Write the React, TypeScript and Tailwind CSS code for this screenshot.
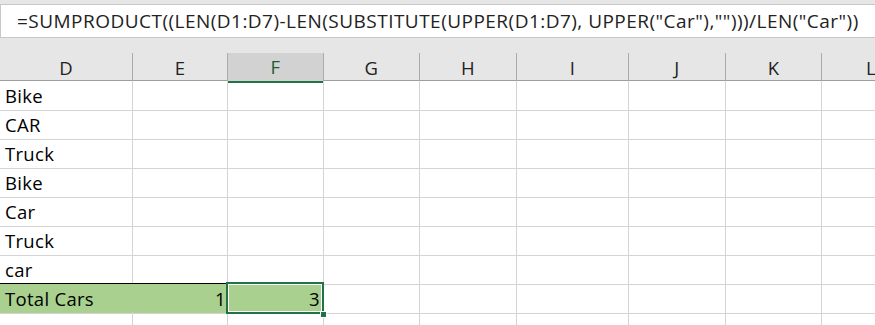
import React from 'react';

const cols = ['D', 'E', 'F', 'G', 'H', 'I', 'J', 'K', 'L'];
const rows = ['Bike', 'CAR', 'Truck', 'Bike', 'Car', 'Truck', 'car'];
const gridCols = 'grid grid-cols-[133px_95px_96px_96px_97px_112px_97px_96px_1fr]';

const App = () => {
  return (
    <div className="w-[875px] h-[325px] overflow-hidden bg-white font-['Open_Sans',sans-serif] text-[18.5px] tracking-[0.3px] text-black">
      <div className="bg-[#e6e6e6] pt-[4px]">
        <div className="h-[34px] bg-white border border-r-0 border-[#c8c8c8] flex items-center pl-[16px] whitespace-nowrap text-[19px] tracking-[0.47px] text-[#222]">
          =SUMPRODUCT((LEN(D1:D7)-LEN(SUBSTITUTE(UPPER(D1:D7), UPPER("Car"),"")))/LEN("Car"))
        </div>
        <div className="h-[15px]" />
        <div className={`${gridCols} h-[28px] border-b border-[#9e9e9e]`}>
          {cols.map((c, i) => (
            <div
              key={c}
              className={
                c === 'F'
                  ? 'bg-[#d2d2d2] border-r border-[#ababab] border-b-2 border-b-[#217346] flex items-center justify-center text-[#1d5a36]'
                  : `flex items-center ${c === 'L' ? 'justify-start pl-[44px]' : 'justify-center'} ${i < cols.length - 1 ? 'border-r border-[#ababab]' : ''} text-[#222]`
              }
            >
              {c}
            </div>
          ))}
        </div>
      </div>
      {rows.map((r, ri) => (
        <div key={ri} className={`${gridCols} h-[29px]`}>
          {cols.map((c, i) => (
            <div
              key={c}
              className={`border-b ${i < cols.length - 1 ? 'border-r' : ''} border-[#d4d4d4] flex items-center pl-[5px] pt-[1px]`}
            >
              {i === 0 ? r : ''}
            </div>
          ))}
        </div>
      ))}
      <div className={`${gridCols} h-[29px] -mt-[1px]`}>
        <div className="bg-[#a9d08e] border-t border-black border-b border-b-[#d4d4d4] flex items-center pl-[5px] pt-[1px]">Total Cars</div>
        <div className="bg-[#a9d08e] border-t border-black border-b border-b-[#d4d4d4] flex items-center justify-end pr-[2px] pt-[1px]">1</div>
        <div className="relative bg-[#a9d08e] border-t border-b border-r border-[#d4d4d4]">
          <div className="absolute -left-[2px] -top-[2px] -right-[1px] -bottom-[1px] border-2 border-[#217346] shadow-[inset_0_0_0_1px_white] flex items-center justify-end pr-[2px] pt-[1px]">
            3
          </div>
          <div className="absolute -right-[4px] -bottom-[5px] w-[7px] h-[7px] bg-[#217346] border border-white" />
        </div>
        {cols.slice(3).map((c, i) => (
          <div key={c} className={`border-b border-[#d4d4d4] ${i < 5 ? 'border-r' : ''}`} />
        ))}
      </div>
      <div className={`${gridCols} h-[29px]`}>
        {cols.map((c, i) => (
          <div key={c} className={`${i < cols.length - 1 ? 'border-r' : ''} border-[#d4d4d4]`} />
        ))}
      </div>
    </div>
  );
};

export default App;
